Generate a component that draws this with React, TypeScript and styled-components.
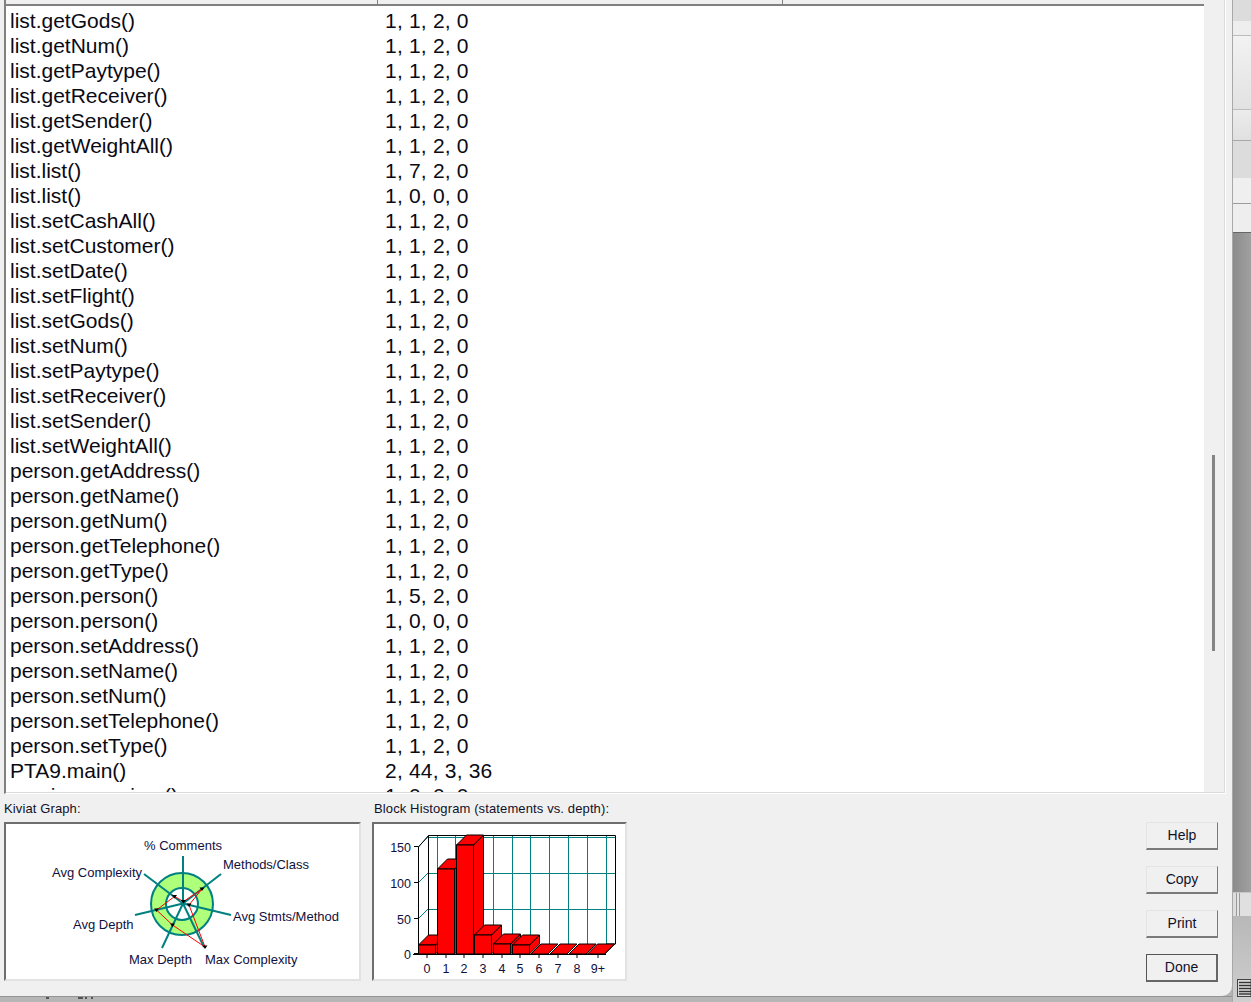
import styled, { createGlobalStyle } from "styled-components";

const GlobalStyle = createGlobalStyle`
  html, body {
    margin: 0;
    padding: 0;
    overflow: hidden;
    background: #b4b4b4;
  }
`;

const METHODS: [string, string][] = [
  ["list.getGods()", "1, 1, 2, 0"],
  ["list.getNum()", "1, 1, 2, 0"],
  ["list.getPaytype()", "1, 1, 2, 0"],
  ["list.getReceiver()", "1, 1, 2, 0"],
  ["list.getSender()", "1, 1, 2, 0"],
  ["list.getWeightAll()", "1, 1, 2, 0"],
  ["list.list()", "1, 7, 2, 0"],
  ["list.list()", "1, 0, 0, 0"],
  ["list.setCashAll()", "1, 1, 2, 0"],
  ["list.setCustomer()", "1, 1, 2, 0"],
  ["list.setDate()", "1, 1, 2, 0"],
  ["list.setFlight()", "1, 1, 2, 0"],
  ["list.setGods()", "1, 1, 2, 0"],
  ["list.setNum()", "1, 1, 2, 0"],
  ["list.setPaytype()", "1, 1, 2, 0"],
  ["list.setReceiver()", "1, 1, 2, 0"],
  ["list.setSender()", "1, 1, 2, 0"],
  ["list.setWeightAll()", "1, 1, 2, 0"],
  ["person.getAddress()", "1, 1, 2, 0"],
  ["person.getName()", "1, 1, 2, 0"],
  ["person.getNum()", "1, 1, 2, 0"],
  ["person.getTelephone()", "1, 1, 2, 0"],
  ["person.getType()", "1, 1, 2, 0"],
  ["person.person()", "1, 5, 2, 0"],
  ["person.person()", "1, 0, 0, 0"],
  ["person.setAddress()", "1, 1, 2, 0"],
  ["person.setName()", "1, 1, 2, 0"],
  ["person.setNum()", "1, 1, 2, 0"],
  ["person.setTelephone()", "1, 1, 2, 0"],
  ["person.setType()", "1, 1, 2, 0"],
  ["PTA9.main()", "2, 44, 3, 36"],
  ["receiver.receiver()", "1, 0, 0, 0"],
];

const KIVIAT_CENTER = { x: 183, y: 903.5 };
const KIVIAT_SPOKES = [
  [183, 856],
  [221, 874],
  [231, 915],
  [204, 947],
  [162, 948],
  [135, 915],
  [144, 874],
];
const KIVIAT_DATA = [
  [183.5, 901.5],
  [202, 889],
  [189, 905],
  [205, 947],
  [172.5, 925],
  [156.5, 910],
  [174.5, 896.5],
];
const KIVIAT_LABELS: [string, number, number][] = [
  ["% Comments", 144, 850],
  ["Methods/Class", 223, 869],
  ["Avg Complexity", 52, 877],
  ["Avg Stmts/Method", 233, 921],
  ["Avg Depth", 73, 929],
  ["Max Depth", 129, 964],
  ["Max Complexity", 205, 964],
];

const BAR_X = [418.5, 437.5, 456.5, 474.5, 493.5, 512.5, 531, 550, 569, 587.5];
const BAR_TOP = [945, 869, 845, 935, 944, 945, 954, 954, 954, 954];
const BAR_LABELS: [string, number][] = [
  ["0", 427],
  ["1", 446],
  ["2", 464],
  ["3", 483],
  ["4", 502],
  ["5", 520],
  ["6", 539],
  ["7", 558],
  ["8", 577],
  ["9+", 598],
];
const GRID_X = [437, 455, 475, 493, 512, 530, 549, 568, 587, 606];
const TICKS: [string, number][] = [
  ["150", 846.5],
  ["100", 882.5],
  ["50", 918.5],
  ["0", 953.5],
];

function KiviatGraph() {
  return (
    <ChartSvg width={352} height={154} viewBox="6 824 352 154">
      <circle cx={182} cy={904} r={31} fill="#aeff7a" stroke="#008080" strokeWidth={2} />
      <circle cx={182} cy={904} r={16} fill="#fff" stroke="#008080" strokeWidth={2} />
      {KIVIAT_SPOKES.map(([x, y]) => (
        <line
          key={`${x}-${y}`}
          x1={KIVIAT_CENTER.x}
          y1={KIVIAT_CENTER.y}
          x2={x}
          y2={y}
          stroke="#008080"
          strokeWidth={2}
        />
      ))}
      <polygon
        points={KIVIAT_DATA.map((p) => p.join(",")).join(" ")}
        fill="none"
        stroke="#ff0000"
        strokeWidth={1}
      />
      {KIVIAT_DATA.map(([x, y]) => (
        <polygon
          key={`${x}-${y}`}
          points={`${x - 2.5},${y - 1.5} ${x + 2.5},${y - 1.5} ${x},${y + 2}`}
          fill="#000"
        />
      ))}
      {KIVIAT_LABELS.map(([label, x, y]) => (
        <ChartLabel key={label} x={x} y={y}>
          {label}
        </ChartLabel>
      ))}
    </ChartSvg>
  );
}

function BlockHistogram() {
  return (
    <ChartSvg width={252} height={154} viewBox="374 824 252 154">
      {[837.5, 873.5, 909.5].map((y) => (
        <line key={y} x1={428} y1={y} x2={616} y2={y} stroke="#008080" />
      ))}
      {[847, 883, 919].map((y) => (
        <line key={y} x1={418} y1={y} x2={428} y2={y - 10} stroke="#008080" />
      ))}
      {GRID_X.map((x) => (
        <line key={x} x1={x + 0.5} y1={835} x2={x + 0.5} y2={944} stroke="#008080" />
      ))}
      <path d="M418.5 847 L428.5 835.5 H615.5 V944 H606 M428.5 835.5 V944 M418.5 847 V954" fill="none" stroke="#000" />
      {BAR_X.map((x, i) => {
        const top = BAR_TOP[i];
        const right = x + 17;
        return (
          <g key={x} fill="#ff0000" stroke="#000" strokeWidth={1}>
            <polygon points={`${right},${top} ${right + 10},${top - 10} ${right + 10},944 ${right},954`} />
            <polygon points={`${x},${top} ${x + 10},${top - 10} ${right + 10},${top - 10} ${right},${top}`} />
            {top < 954 && <rect x={x} y={top} width={17} height={954 - top} />}
          </g>
        );
      })}
      <path d="M413 954.5 H606" stroke="#000" fill="none" />
      {TICKS.map(([label, y]) => (
        <g key={label}>
          <line x1={414} y1={y} x2={418} y2={y} stroke="#000" />
          <ChartLabel x={411} y={y + 5} textAnchor="end" $size={12.5}>
            {label}
          </ChartLabel>
        </g>
      ))}
      {BAR_LABELS.map(([label, x]) => (
        <g key={label}>
          <line x1={x} y1={955} x2={x} y2={958} stroke="#000" />
          <ChartLabel x={x} y={973} textAnchor="middle" $size={12.5}>
            {label}
          </ChartLabel>
        </g>
      ))}
    </ChartSvg>
  );
}

export default function App() {
  return (
    <>
      <GlobalStyle />
      <Root>
        <Window>
          <ListFrame>
            <ListMain>
              <ListHeader>
                <HeaderCell $width={372} />
                <HeaderCell $width={405} />
              </ListHeader>
              <ListBody>
                {METHODS.map(([name, values], i) => (
                  <MethodRow key={`${name}-${i}`}>
                    <span>{name}</span>
                    <MethodValues>{values}</MethodValues>
                  </MethodRow>
                ))}
              </ListBody>
            </ListMain>
            <ScrollTrack>
              <ScrollThumb />
            </ScrollTrack>
          </ListFrame>
          <BottomPanel>
            <ChartColumn>
              <ChartCaption>Kiviat Graph:</ChartCaption>
              <ChartPanel $width={357}>
                <KiviatGraph />
              </ChartPanel>
            </ChartColumn>
            <ChartColumn>
              <ChartCaption $inset={2}>Block Histogram (statements vs. depth):</ChartCaption>
              <ChartPanel $width={255}>
                <BlockHistogram />
              </ChartPanel>
            </ChartColumn>
            <ButtonColumn>
              <DialogButton>Help</DialogButton>
              <DialogButton>Copy</DialogButton>
              <DialogButton>Print</DialogButton>
              <DialogButton $primary>Done</DialogButton>
            </ButtonColumn>
          </BottomPanel>
        </Window>
        <BackStrip>
          <Band $height={21} $bg="#dcdcdc" />
          <Band $height={15} $bg="#eeeeee" $line="#bcbcbc" />
          <Band $height={74} $bg="linear-gradient(#f2f2f2, #e2e2e2)" $line="#bcbcbc" />
          <Band $height={31} $bg="linear-gradient(#ececec, #e0e0e0)" $line="#a8a8a8" />
          <Band $height={37} $bg="#dcdcdc" />
          <Band $height={26} $bg="#efefef" $line="#9c9c9c" />
          <Band $height={29} $bg="#eeeeee" $line="#666666" />
          <Band $height={659} $bg="linear-gradient(90deg, #8c8c8c, #a0a0a0)" />
          <CellBand />
          <LowerBand>
            <LinesIcon viewBox="0 0 14 18" width={14} height={18}>
              <rect x={0.5} y={0.5} width={13.5} height={17} fill="#d8d8d8" stroke="#444" />
              {[3.5, 6.5, 9.5, 12.5, 15].map((y) => (
                <line key={y} x1={2} y1={y} x2={14} y2={y} stroke="#333" strokeWidth={1.4} />
              ))}
            </LinesIcon>
          </LowerBand>
        </BackStrip>
        <BottomStrip>
          <Speck $left={46} $width={3} />
          <Speck $left={78} $width={5} />
          <Speck $left={85} $width={2} />
          <Speck $left={91} $width={2} />
        </BottomStrip>
      </Root>
    </>
  );
}

const Root = styled.div`
  display: grid;
  grid-template-columns: 1232px 19px;
  grid-template-rows: 996px 6px;
  width: 1251px;
  height: 1002px;
  overflow: hidden;
  background: #b4b4b4;
  font-family: "Liberation Sans", Arial, sans-serif;
  color: #000;
`;

const Window = styled.div`
  display: flex;
  flex-direction: column;
  background: #f0f0f0;
  border-bottom-right-radius: 10px;
`;

const ListFrame = styled.div`
  display: flex;
  flex: none;
  height: 794px;
  margin: 0 6px 0 4px;
  box-sizing: border-box;
  border-left: 2px solid #808080;
  border-right: 1px solid #fff;
  border-bottom: 1px solid #fff;
`;

const ListMain = styled.div`
  display: flex;
  flex-direction: column;
  flex: 1;
  min-width: 0;
  border-bottom: 1px solid #dcdcdc;
`;

const ListHeader = styled.div`
  display: flex;
  flex: none;
  height: 6px;
  box-sizing: border-box;
  border-bottom: 2px solid #808080;
  background: #f0f0f0;
`;

const HeaderCell = styled.div<{ $width: number }>`
  width: ${(p) => p.$width}px;
  height: 6px;
  box-sizing: border-box;
  border-right: 1px solid #808080;
`;

const ListBody = styled.div`
  flex: 1;
  min-height: 0;
  padding-top: 2px;
  overflow: hidden;
  background: #fff;
`;

const MethodRow = styled.div`
  display: grid;
  grid-template-columns: 375px 1fr;
  height: 25px;
  padding-left: 4px;
  font-size: 21px;
  line-height: 25px;
  color: #0a0a14;
`;

const MethodValues = styled.span`
  letter-spacing: 0.2px;
`;

const ScrollTrack = styled.div`
  position: relative;
  flex: none;
  width: 21px;
  box-sizing: border-box;
  background: #f0f0f0;
  border-right: 1px solid #dcdcdc;
  border-bottom: 1px solid #dcdcdc;
`;

const ScrollThumb = styled.div`
  position: absolute;
  left: 8px;
  top: 455px;
  width: 3px;
  height: 196px;
  background: #858585;
`;

const BottomPanel = styled.div`
  display: flex;
  flex: 1;
  gap: 11px;
  padding: 6px 14px 0 4px;
`;

const ChartColumn = styled.div`
  display: flex;
  flex-direction: column;
`;

const ChartCaption = styled.div<{ $inset?: number }>`
  height: 22px;
  padding-left: ${(p) => p.$inset ?? 0}px;
  font-size: 13px;
  line-height: 17px;
  letter-spacing: 0.12px;
  color: #101028;
`;

const ChartPanel = styled.div<{ $width: number }>`
  width: ${(p) => p.$width}px;
  height: 159px;
  box-sizing: border-box;
  background: #fff;
  border-style: solid;
  border-width: 2px;
  border-color: #6e6e6e #e2e2e2 #e2e2e2 #6e6e6e;
`;

const ChartSvg = styled.svg`
  display: block;
`;

const ChartLabel = styled.text<{ $size?: number }>`
  font-family: "Liberation Sans", Arial, sans-serif;
  font-size: ${(p) => p.$size ?? 13}px;
  fill: #101040;
`;

const ButtonColumn = styled.div`
  display: flex;
  flex-direction: column;
  gap: 16px;
  margin-left: auto;
  padding-top: 22px;
`;

const DialogButton = styled.button<{ $primary?: boolean }>`
  width: 72px;
  height: 28px;
  padding: 0 0 2px;
  box-sizing: border-box;
  background: #f0f0f0;
  font-family: "Liberation Sans", Arial, sans-serif;
  font-size: 14px;
  color: #101028;
  border-style: solid;
  border-width: ${(p) => (p.$primary ? "1px 2px 2px 1px" : "1px 1px 2px 1px")};
  border-color: ${(p) =>
    p.$primary ? "#555 #666 #666 #555" : "#e4e4e4 #7a7a7a #7a7a7a #e4e4e4"};
`;

const BackStrip = styled.div`
  grid-column: 2;
  grid-row: 1 / span 2;
  display: flex;
  flex-direction: column;
  border-left: 1px solid #a8a8a8;
`;

const Band = styled.div<{ $height: number; $bg: string; $line?: string }>`
  flex: none;
  height: ${(p) => p.$height}px;
  box-sizing: border-box;
  background: ${(p) => p.$bg};
  border-bottom: ${(p) => (p.$line ? `1px solid ${p.$line}` : "none")};
`;

const CellBand = styled.div`
  flex: none;
  height: 24px;
  box-sizing: border-box;
  background: linear-gradient(
    90deg,
    #dddddd 0 3px,
    #999 3px 4px,
    #e4e4e4 4px 6px,
    #999 6px 7px,
    #e0e0e0 7px
  );
  border-top: 1px solid #c8c8c8;
`;

const LowerBand = styled.div`
  flex: 1;
  display: flex;
  justify-content: flex-end;
  align-items: flex-start;
  padding-top: 63px;
  background: linear-gradient(#b8b8b8, #cfcfcf);
`;

const LinesIcon = styled.svg`
  display: block;
`;

const BottomStrip = styled.div`
  position: relative;
  grid-column: 1;
  grid-row: 2;
  border-top: 1px solid #949494;
  background: #b6b6b6;
`;

const Speck = styled.div<{ $left: number; $width: number }>`
  position: absolute;
  top: 0;
  left: ${(p) => p.$left}px;
  width: ${(p) => p.$width}px;
  height: 2px;
  background: #555;
`;
